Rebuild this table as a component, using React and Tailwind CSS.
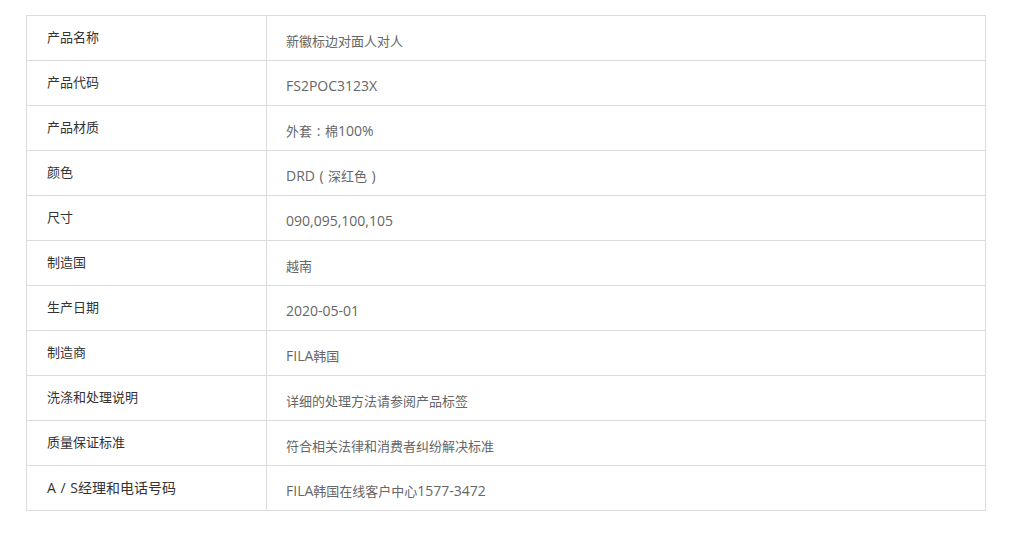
const rows = [
  ['产品名称', '新徽标边对面人对人'],
  ['产品代码', 'FS2POC3123X'],
  ['产品材质', '外套：棉100%'],
  ['颜色', 'DRD（深红色）'],
  ['尺寸', '090,095,100,105'],
  ['制造国', '越南'],
  ['生产日期', '2020-05-01'],
  ['制造商', 'FILA韩国'],
  ['洗涤和处理说明', '详细的处理方法请参阅产品标签'],
  ['质量保证标准', '符合相关法律和消费者纠纷解决标准'],
  ['A / S经理和电话号码', 'FILA韩国在线客户中心1577-3472', true],
];

const wide = { '（': '(', '）': ')', '：': ':' };

// latin runs sit a bit larger than the CJK text, like YaHei does
function Mixed({ text }) {
  const parts = text.split(/([\x20-\x7e]+|[（）：])/).filter(Boolean);
  return parts.map((p, i) => {
    if (wide[p]) {
      return (
        <span key={i} className="inline-block w-[13px] text-center text-[14px]" style={{ fontFamily: '"Open Sans", sans-serif' }}>
          {wide[p]}
        </span>
      );
    }
    if (/^[\x20-\x7e]+$/.test(p)) {
      return (
        <span key={i} className="text-[14px] whitespace-pre" style={{ fontFamily: '"Open Sans", sans-serif' }}>
          {p}
        </span>
      );
    }
    return <span key={i}>{p}</span>;
  });
}

export default function App() {
  return (
    <div
      className="w-[1014px] h-[535px] bg-white pt-[15px] pl-[26px]"
      style={{ fontFamily: '"Noto Sans CJK SC", "Noto Sans", sans-serif' }}
    >
      <div className="w-[960px] border border-[#dcdcdc]">
        {rows.map(([label, value, big], i) => {
          const last = i === rows.length - 1;
          return (
            <div key={label} className={`flex ${last ? 'h-[44px]' : 'h-[45px] border-b border-[#dcdcdc]'}`}>
              <div
                className={`w-[240px] border-r border-[#dcdcdc] pl-[20px] pt-[12px] leading-[18px] text-[#333] ${
                  big ? 'text-[14px] [word-spacing:1px]' : 'text-[13px]'
                }`}
              >
                <Mixed text={label} />
              </div>
              <div className="flex-1 pl-[19px] pt-[16px] text-[13px] leading-[18px] text-[#666]">
                <Mixed text={value} />
              </div>
            </div>
          );
        })}
      </div>
    </div>
  );
}
